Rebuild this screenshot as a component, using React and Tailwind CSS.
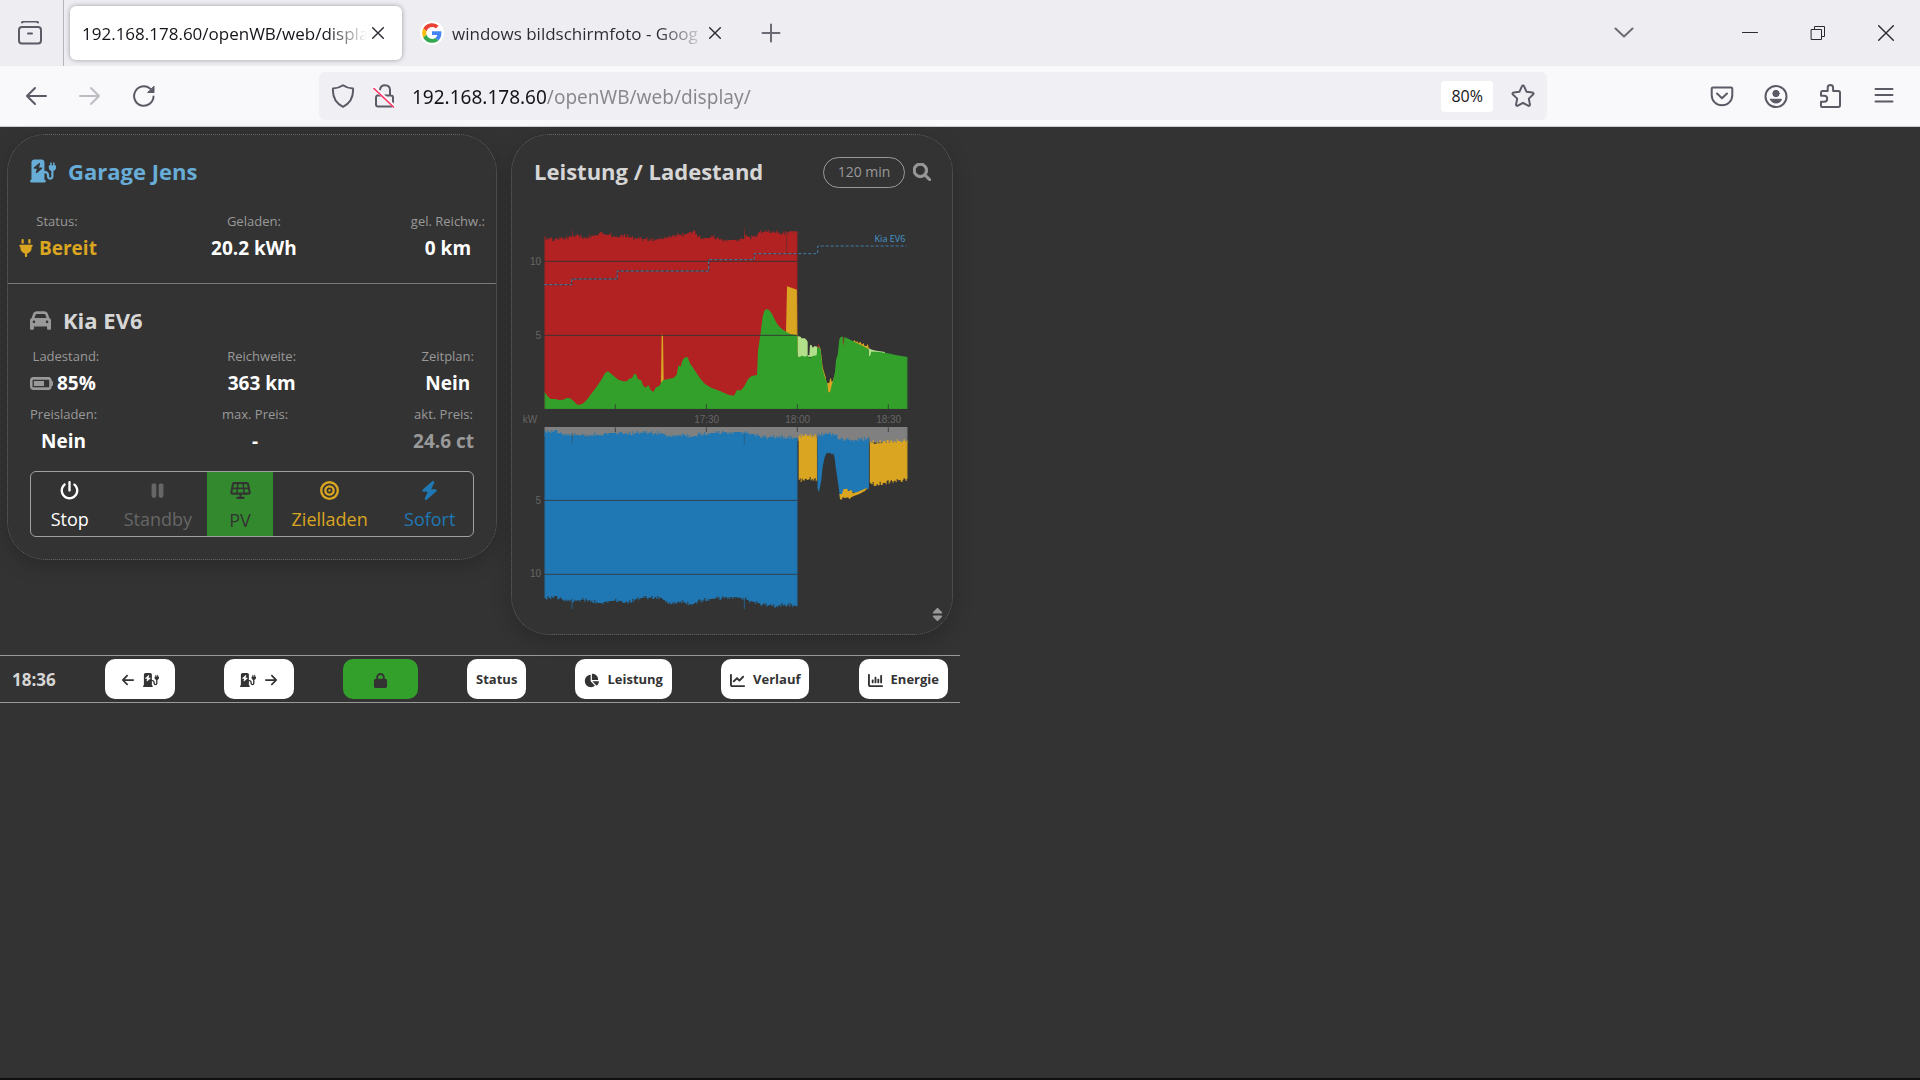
import {
  FaArrowLeft, FaArrowRight, FaBatteryThreeQuarters, FaBolt, FaBullseye, FaCar, FaChargingStation,
  FaChartColumn, FaChartLine, FaChartPie, FaLock, FaMagnifyingGlass, FaPause, FaPlug, FaPowerOff,
  FaSolarPanel, FaSort,
} from 'react-icons/fa6';

// ── Browser chrome ─────────────────────────────────────────────────────────────
function Svg({ size = 24, className = '', sw = 2, children }) {
  return (
    <svg width={size} height={size} viewBox={`0 0 ${size} ${size}`} fill="none" stroke="currentColor" strokeWidth={sw}
      strokeLinecap="round" strokeLinejoin="round" className={`shrink-0 ${className}`} aria-hidden="true">
      {children}
    </svg>
  );
}

function GoogleIcon() {
  return (
    <svg width="24" height="24" viewBox="-3 -3 54 54" className="shrink-0 rounded-full bg-white p-px" aria-hidden="true">
      <path fill="#EA4335" d="M24 9.5c3.54 0 6.71 1.22 9.21 3.6l6.85-6.85C35.9 2.38 30.47 0 24 0 14.62 0 6.51 5.38 2.56 13.22l7.98 6.19C12.43 13.72 17.74 9.5 24 9.5z" />
      <path fill="#4285F4" d="M46.98 24.55c0-1.57-.15-3.09-.38-4.55H24v9.02h12.94c-.58 2.96-2.26 5.48-4.78 7.18l7.73 6c4.51-4.18 7.09-10.36 7.09-17.65z" />
      <path fill="#FBBC05" d="M10.53 28.59c-.48-1.45-.76-2.99-.76-4.59s.27-3.14.76-4.59l-7.98-6.19C.92 16.46 0 20.12 0 24c0 3.88.92 7.54 2.56 10.78l7.97-6.19z" />
      <path fill="#34A853" d="M24 48c6.48 0 11.93-2.13 15.89-5.81l-7.73-6c-2.15 1.45-4.92 2.3-8.16 2.3-6.26 0-11.57-4.22-13.47-9.91l-7.98 6.19C6.51 42.62 14.62 48 24 48z" />
    </svg>
  );
}

function CloseIcon({ size = 12, sw = 1.4 }) {
  return (
    <Svg size={size} sw={sw}><path d={size === 12 ? 'M.7.7 11.3 11.3M11.3.7.7 11.3' : 'M.7.7 15.3 15.3M15.3.7.7 15.3'} /></Svg>
  );
}

function TabBar() {
  return (
    <div className="flex h-[66px] items-center bg-[#eeedf2] text-[#2b2a33]">
      <button aria-label="Firefox View" className="flex h-full w-16 items-center justify-center border-r border-[#b4b4ba] pr-1 text-[#5b5b66]">
        <Svg>
          <path d="M4 1.5c.4-.7 1-1 1.800-1h12.400c.8 0 1.400.3 1.800 1" />
          <rect x="1" y="6" width="22" height="16.500" rx="3" />
          <path d="M10 12.500h4" />
        </Svg>
      </button>
      <div className="ml-1.5 flex h-[54px] w-[332px] items-center justify-between rounded-md bg-white pr-[18px] pl-3 shadow-[0_0_5px_rgba(0,0,0,0.35)]">
        <span className="w-72 bg-[linear-gradient(90deg,#15141a_85%,transparent_99%)] bg-clip-text pt-0.5 text-[17px] whitespace-nowrap text-transparent">
          192.168.178.60/openWB/web/displa
        </span>
        <button aria-label="Tab schließen"><CloseIcon /></button>
      </div>
      <div className="ml-[18px] flex h-[54px] items-center">
        <GoogleIcon />
        <span className="ml-2 w-[252px] bg-[linear-gradient(90deg,#2b2a33_82%,transparent_101%)] bg-clip-text pt-0.5 text-[17px] whitespace-nowrap text-transparent">
          windows bildschirmfoto - Goog
        </span>
        <button aria-label="Tab schließen" className="ml-[5px]"><CloseIcon /></button>
      </div>
      <button aria-label="Neuer Tab" className="ml-10 text-[#6b6b76]">
        <Svg size={20} sw={2}><path d="M10 1.500v17M1.500 10h17" /></Svg>
      </button>
      <div className="ml-auto flex items-center gap-[52px] pr-[26px]">
        <button aria-label="Alle Tabs auflisten" className="mr-14 text-[#6b6b76]">
          <Svg size={20}><path d="m1.500 5.500 8.500 8 8.500-8" /></Svg>
        </button>
        <button aria-label="Minimieren"><Svg size={16} sw={1}><path d="M.5 7.500h15" /></Svg></button>
        <button aria-label="Verkleinern">
          <Svg size={16} sw={1}><path d="M1.500 4.500h10v10h-10zM4.500 4.500v-3h10v10h-3" /></Svg>
        </button>
        <button aria-label="Schließen"><CloseIcon size={16} /></button>
      </div>
    </div>
  );
}

function NavBar() {
  return (
    <div className="flex h-[61px] items-center border-b border-[#cccccc] bg-[#f9f9fb] text-[#5b5b66]">
      <div className="flex w-[319px] items-center gap-[30px] pl-6">
        <button aria-label="Zurück"><Svg><path d="M22 12H3M11 4l-8 8 8 8" /></Svg></button>
        <button aria-label="Vor" disabled className="text-[#bdbdc3]"><Svg><path d="M2 12h19M13 4l8 8-8 8" /></Svg></button>
        <button aria-label="Neu laden">
          <Svg>
            <path d="M21.500 12.500A9.700 9.700 0 1 1 18 4.600" />
            <path d="M22 2.500v6h-6z" fill="currentColor" strokeWidth="1" />
          </Svg>
        </button>
      </div>
      <div className="flex h-12 flex-1 items-center rounded-md bg-[#f0f0f4] pr-3 pl-3">
        <Svg><path d="M12 1.200c3 2.200 6.300 3 10 3.300.6 8-2.800 14.600-10 18.300C4.800 19.100 1.400 12.500 2 4.500c3.700-.3 7-1.100 10-3.300z" /></Svg>
        <Svg className="ml-[18px]">
          <path d="M4 11.500h14c1 0 2 .8 2 2v7c0 1-.8 2-2 2H5c-1.200 0-2-.8-2-2v-7c0-.8.3-1.400 1-2zM7 5.500c.5-2.600 2-4.300 5-4.300 3.200 0 5 2 5 5v5" />
          <path d="M1 3.500 21.500 22.500" stroke="#f9f9fb" strokeWidth="3.500" />
          <path d="M1 4.500 20.500 23" stroke="#ff2e5f" strokeWidth="1.600" />
        </Svg>
        <input aria-label="Adresse" defaultValue="192.168.178.60/openWB/web/display/"
          className="ml-[15px] min-w-0 flex-1 bg-[linear-gradient(90deg,#15141a_135px,#87868b_135px)] bg-clip-text pt-0.5 font-['Noto_Sans'] text-[19px] text-transparent outline-none" />
        <button className="mr-[18px] h-[31px] rounded bg-white px-2.5 text-base text-[#15141a]">80%</button>
        <button aria-label="Lesezeichen">
          <Svg><path d="M12 1.500c.5 0 .9.300 1.100.8l2.400 5.400 5.900.7c1.100.1 1.500 1.400.7 2.100l-4.300 4.100 1.100 5.800c.2 1.100-.9 1.800-1.800 1.300L12 18.800l-5.100 2.900c-.9.5-2-.2-1.800-1.300l1.100-5.800L1.900 10.500c-.8-.7-.4-2 .7-2.100l5.900-.7 2.400-5.400c.2-.5.6-.8 1.100-.8z" /></Svg>
        </button>
      </div>
      <div className="ml-[163px] flex items-center gap-[30px] pr-6">
        <button aria-label="Pocket">
          <Svg><path d="M3 3.500h18c.8 0 1.300.5 1.300 1.300V11c0 6-4.600 10.300-10.300 10.300S1.700 17 1.700 11V4.800C1.700 4 2.200 3.500 3 3.500zM7 9.500l5 4.700 5-4.700" /></Svg>
        </button>
        <button aria-label="Konto">
          <Svg>
            <circle cx="12" cy="12.500" r="10.500" />
            <circle cx="12" cy="9.500" r="3.200" fill="currentColor" strokeWidth="1" />
            <path d="M6.500 15.300h11c-.6 2.200-2.600 3.700-5.500 3.700s-4.900-1.500-5.500-3.700z" fill="currentColor" strokeWidth="1" />
          </Svg>
        </button>
        <button aria-label="Erweiterungen">
          <Svg><path d="M4 23c-.6 0-1-.4-1-1v-4.300h3.200a3 3 0 0 0 0-6H3V8.500C3 7.700 3.500 7 4.300 7h5.400V3.700a2.700 2.700 0 0 1 5.400 0V7h5.200c1 0 1.700.7 1.700 1.700v12.600c0 1-.7 1.700-1.700 1.700z" /></Svg>
        </button>
        <button aria-label="Menü"><Svg><path d="M3.500 5h17M3.500 11h17M3.500 17.500h17" /></Svg></button>
      </div>
    </div>
  );
}

// ── Charge point card ──────────────────────────────────────────────────────────
function Info({ label, children, className = 'text-white' }) {
  return (
    <div className="flex flex-col items-center gap-1">
      <div className="text-[13px] leading-[18px] text-[#999999]">{label}</div>
      <div className={`flex items-center gap-1 text-[19px] leading-7 font-bold ${className}`}>{children}</div>
    </div>
  );
}

function ModeButton({ icon: Icon, size = 19, className, children }) {
  return (
    <button className={`flex flex-col items-center justify-center gap-[7px] pt-1 ${className}`}>
      <Icon size={size} />
      {children}
    </button>
  );
}

function ChargeModes() {
  return (
    <div className="mx-[22px] mt-4 grid h-[66px] grid-cols-[78fr_99fr_66fr_114fr_87fr] overflow-hidden rounded-md border border-[#a0a0a0] text-lg leading-6">
      <ModeButton icon={FaPowerOff} className="text-white">Stop</ModeButton>
      <ModeButton icon={FaPause} className="text-[#666666]">Standby</ModeButton>
      <ModeButton icon={FaSolarPanel} size={21} className="bg-[#338a2e] text-[#333333]">PV</ModeButton>
      <ModeButton icon={FaBullseye} className="text-[#daa520]">Zielladen</ModeButton>
      <ModeButton icon={FaBolt} className="text-[#1f78b4]">Sofort</ModeButton>
    </div>
  );
}

function ChargePointCard() {
  return (
    <section className="self-start rounded-[38px] border border-dotted border-[#666666] bg-[#333333] pt-5 pb-[22px] shadow-[0_6px_20px_rgba(0,0,0,0.2)]">
      <h2 className="flex h-8 items-center gap-3 px-[22px] text-[22px] font-bold text-[#68add8]">
        <FaChargingStation size={26} />Garage Jens
      </h2>
      <div className="mt-[25px] flex justify-between border-b border-[#777777] pr-[11px] pb-[21px] pl-[9px]">
        <Info label="Status:" className="text-[#daa520]"><FaPlug size={18} />Bereit</Info>
        <Info label="Geladen:">20.2 kWh</Info>
        <Info label="gel. Reichw.:">0 km</Info>
      </div>
      <h2 className="mt-5 flex h-8 items-center gap-3 px-[22px] text-[22px] font-bold text-[#d6d6d6]">
        <FaCar size={21} className="text-[#999999]" />Kia EV6
      </h2>
      <div className="mt-[11px] flex justify-between px-[22px]">
        <Info label="Ladestand:" className="pr-1.5 text-white"><FaBatteryThreeQuarters size={23} className="text-[#999999]" />85%</Info>
        <Info label="Reichweite:">363 km</Info>
        <Info label="Zeitplan:">Nein</Info>
      </div>
      <div className="mt-2 flex justify-between px-[22px]">
        <Info label="Preisladen:">Nein</Info>
        <Info label="max. Preis:">-</Info>
        <Info label="akt. Preis:" className="text-[#999999]">24.6 ct</Info>
      </div>
      <ChargeModes />
    </section>
  );
}

// ── Power / SoC chart ──────────────────────────────────────────────────────────
const GRID_TOP = [[118, 333], [123, 343], [155, 343], [165, 335], [180, 340], [203, 334], [215, 330], [235, 338], [255, 333], [275, 330], [287, 320], [300, 329], [315, 329], [330, 336], [345, 330], [365, 332], [385, 340], [420, 342], [450, 344], [475, 336], [505, 330], [540, 328], [555, 320], [570, 322], [580, 336], [605, 340], [625, 335], [640, 343], [680, 345], [715, 342], [720, 330], [735, 338], [750, 332], [765, 321], [800, 319], [815, 321], [835, 325], [845, 320], [878, 317]];
const PV_TOP = '103,335 112,348 122,357 135,357 148,360 160,359 170,354 180,355 190,362 200,373 207,375 220,370 230,360 245,340 260,320 275,298 285,280 293,274 300,278 315,291 325,299 340,304 350,304 358,296 366,294 373,281 378,283 384,298 393,300 400,317 407,323 415,315 422,330 430,336 438,322 448,318 453,308 460,300 475,297 490,294 500,284 505,256 512,260 518,240 525,232 533,232 540,250 555,272 570,295 585,312 605,324 630,333 655,344 670,347 675,343 680,331 693,331 702,320 715,296 725,288 741,285 744,212 752,158 758,110 763,92 769,87 777,90 785,100 795,120 802,133 813,145 828,155 840,162 862,166 863,230 870,230 876,227 886,230 892,226 900,235 908,228 920,226 922,205 927,200 932,210 937,265 945,293 952,310 955,337 960,337 966,312 970,300 975,275 978,240 983,225 988,178 993,170 999,170 1001,192 1003,171 1015,176 1040,189 1060,199 1075,207 1078,228 1083,215 1100,215 1130,219 1160,226 1193,231';
const HOUSE_BOTTOM = [[103, 96], [110, 95], [145, 95], [150, 102], [170, 101], [187, 106], [205, 104], [230, 108], [250, 101], [270, 106], [285, 99], [310, 99], [340, 96], [352, 101], [380, 98], [420, 98], [455, 100], [470, 105], [520, 104], [545, 111], [565, 103], [600, 99], [640, 97], [700, 96], [720, 101], [745, 107], [770, 113], [800, 109], [850, 113], [863, 114]];
const CHARGE_BOTTOM = [[103, 599], [110, 593], [145, 593], [155, 599], [180, 599], [190, 605], [210, 599], [240, 601], [270, 610], [290, 604], [320, 601], [355, 606], [375, 598], [400, 593], [450, 592], [460, 600], [480, 608], [510, 604], [545, 614], [560, 605], [580, 599], [620, 595], [660, 591], [700, 594], [715, 602], [740, 608], [760, 614], [790, 618], [820, 613], [850, 616], [863, 620]];
const BAT_TOP = [[866, 108], [885, 108], [900, 106], [922, 108]];
const BAT_BOTTOM = [[866, 240], [885, 242], [900, 236], [922, 240]];
const LATE_TOP = [[922, 106], [935, 103], [960, 102], [978, 106], [985, 116], [1000, 117], [1030, 120], [1077, 115]];
const LATE_BAT_TOP = [[1079, 120], [1090, 126], [1120, 124], [1150, 124], [1193, 121]];
const LATE_BAT_BOTTOM = [[1079, 243], [1090, 253], [1120, 249], [1150, 243], [1193, 237]];
const SOC = '118,479 200,479 200,462 337,462 337,438 611,438 611,404 748,404 748,386 938,386 938,363 1205,363';

// Samples a profile every 3 units and adds the small load ripple, as a stepped edge.
function ripple(points, amp = 5) {
  const out = [];
  const end = points[points.length - 1][0];
  let i = 0;
  for (let x = points[0][0]; x <= end; x += 3) {
    while (i < points.length - 2 && x > points[i + 1][0]) i += 1;
    const [x0, y0] = points[i];
    const [x1, y1] = points[i + 1];
    const y = y0 + ((y1 - y0) * (x - x0)) / (x1 - x0);
    const n = Math.sin(x * 12.9898) * 43758.5453;
    const r = n - Math.floor(n);
    const v = Math.round(y + (r > 0.7 ? amp : r < 0.2 ? -amp : 0));
    out.push(`${x},${v}`, `${Math.min(x + 3, end)},${v}`);
  }
  return out;
}
const band = (top, bottom) => [...ripple(top), ...ripple(bottom).reverse()].join(' ');

const TICKS = [[316, ''], [589, '17:30'], [862, '18:00'], [1135, '18:30']];

function PowerChart() {
  return (
    <svg viewBox="0 0 1320 1236" className="mt-4 block w-full font-['Liberation_Sans']" role="img" aria-label="Leistung und Ladestand">
      {/* grid power */}
      <g transform="translate(-21 -237)">
        <polygon fill="#b22222" points={`118,852 ${ripple(GRID_TOP).join(' ')} 878,852`} />
        <path d="M201 340 202.500 305 204 340zM717 340 718.500 302 720 340z" fill="#b22222" />
        <path d="M845 316V385" stroke="#333333" strokeWidth="2" strokeOpacity="0.7" />
      </g>
      {/* production: PV, battery, charge from battery */}
      <g transform="translate(-6 228)">
        <polygon fill="#daa520" points="453,310 455,163 459,165 461,302 460,310" />
        <polygon fill="#daa520" points="828,158 831,19 861,29 863,168" />
        <polygon fill="#daa520" points="862,168 865,172 865,200 862,230" />
        <polygon fill="#daa520" points="924,204 926,195 932,208 938,262 947,292 950,310 958,308 960,297 963,294 965,306 969,302 975,280 966,340 950,340 944,300 934,262" />
        <polygon fill="#b22222" points="922,202 925,190 929,206" />
        <polygon fill="#daa520" points="1028,186 1034,180 1038,187 1042,183 1045,190 1052,185 1055,194 1061,189 1063,197 1070,198 1073,191 1078,210 1050,200" />
        <polygon fill="#b2df8a" points="863,232 863,168 872,170 874,175 884,175 890,180 893,186 893,225 898,226 900,196 904,194 908,203 914,198 922,200 922,230" />
        <polygon fill="#b2df8a" points="1076,205 1086,209 1100,212 1125,216 1125,222 1076,222" />
        <polygon fill="#33a02c" points={`103,387 ${PV_TOP} 1193,387`} />
        <polygon fill="#b2df8a" points="1077,206 1084,209 1082,222 1080,228 1077,228" />
        <path d="M1000 172V194" stroke="#b22222" strokeWidth="2" />
        <path d="M104 337V388H1192V232M862 166V-140" stroke="#333333" strokeOpacity="0.45" strokeWidth="3" fill="none" />
        <path d="M103 166H862M103 -56H862" stroke="#333333" strokeWidth="3" strokeOpacity="0.9" />
        <path d="M104 -130V337" stroke="#333333" strokeOpacity="0.3" strokeWidth="3" />
      </g>
      {/* consumption: house, charging, battery */}
      <g transform="translate(-6 588)">
        <polygon fill="#808080" points="103,81 103,108 860,122 1193,130 1193,81" />
        <polygon fill="#1f78b4" points={band(HOUSE_BOTTOM, CHARGE_BOTTOM)} />
        <path d="M186 590V627M703 590V627" stroke="#1f78b4" strokeWidth="2" />
        <path d="M187 100V131M703 100V135" stroke="#333333" strokeOpacity="0.5" strokeWidth="2" />
        <polygon fill="#daa520" points={band(BAT_TOP, BAT_BOTTOM)} />
        <polygon fill="#1f78b4" points={`${ripple(LATE_TOP).join(' ')} 1077,262 1074,270 1068,264 1056,274 1040,280 1025,276 1010,270 996,282 989,286 986,262 982,235 977,200 974,174 970,160 966,164 961,158 956,160 950,158 944,172 938,200 934,240 930,262 926,277 922,262`} />
        <polygon fill="#daa520" points="988,282 996,282 1000,268 1012,266 1014,274 1025,270 1028,280 1042,276 1072,263 1066,272 1048,282 1032,288 1024,292 1019,298 1014,292 1006,294 998,292 995,299 990,298" />
        <polygon fill="#daa520" points={band(LATE_BAT_TOP, LATE_BAT_BOTTOM)} />
        <path d="M104 81V600M862 112V622M1192 81V238M1078 112V262M922 106V262" stroke="#333333" strokeOpacity="0.35" strokeWidth="3" />
        <path d="M103 301H862M103 523H862" stroke="#333333" strokeWidth="3" strokeOpacity="0.8" />
      </g>
      {/* axes */}
      <g transform="translate(-6 588)" fill="#666666" fontSize="30">
        {TICKS.map(([x, label]) => (
          <g key={x}>
            <path d={`M${x} 13V27M${x} 82V96`} stroke="#333333" strokeWidth="3" strokeOpacity="0.8" />
            <text x={x + 1} y="69" textAnchor="middle">{label}</text>
          </g>
        ))}
        <text x="38" y="69">kW</text>
        <text x="93" y="-183" textAnchor="end">5</text>
        <text x="93" y="-404" textAnchor="end">10</text>
        <text x="93" y="312" textAnchor="end">5</text>
        <text x="93" y="532" textAnchor="end">10</text>
      </g>
      {/* state of charge */}
      <g transform="translate(-21 -237)" fill="none">
        <polyline points={SOC} stroke="#333333" strokeWidth="4" strokeOpacity="0.6" />
        <polyline points={SOC} stroke="#4292c6" strokeWidth="3" strokeDasharray="9 6" strokeOpacity="0.8" />
        <text x="1201" y="351" textAnchor="end" fill="#4292c6" fontSize="27" className="font-['Noto_Sans']">Kia EV6</text>
      </g>
    </svg>
  );
}

function PowerCard() {
  return (
    <section className="relative rounded-[38px] border border-dotted border-[#666666] bg-[#333333] pt-[21px] pb-[18px] shadow-[0_6px_20px_rgba(0,0,0,0.2)]">
      <div className="flex h-8 items-center pr-[21px] pl-[22px]">
        <h2 className="mr-auto pb-0.5 text-[22px] font-bold text-[#d6d6d6]">Leistung / Ladestand</h2>
        <button className="h-[31px] w-[82px] rounded-full border border-[#999999] text-sm text-[#999999]">120 min</button>
        <button aria-label="Zoom" className="ml-2 text-[#999999]"><FaMagnifyingGlass size={18} stroke="currentColor" strokeWidth="28" /></button>
      </div>
      <PowerChart />
      <button aria-label="Diagramm umkehren" className="absolute right-[7px] bottom-3 text-[#999999]"><FaSort size={15} /></button>
    </section>
  );
}

// ── Footer bar ─────────────────────────────────────────────────────────────────
function FooterButton({ children, className = 'bg-white px-[9px]', ...rest }) {
  return (
    <button className={`flex h-10 items-center justify-center gap-2 rounded-[10px] pt-0.5 text-[13px] font-bold text-[#333333] ${className}`} {...rest}>
      {children}
    </button>
  );
}

function FooterBar() {
  return (
    <nav className="mt-5 flex h-12 items-center justify-between border-y border-[#999999] pr-3 pl-3">
      <span className="pt-0.5 text-[17px] font-bold text-[#d6d6d6]">18:36</span>
      <FooterButton className="w-[70px] bg-white" aria-label="Voriger Ladepunkt"><FaArrowLeft size={14} /><FaChargingStation size={16} /></FooterButton>
      <FooterButton className="w-[70px] bg-white" aria-label="Nächster Ladepunkt"><FaChargingStation size={16} /><FaArrowRight size={14} /></FooterButton>
      <FooterButton className="w-[75px] bg-[#33a02c]" aria-label="Sperren"><FaLock size={15} /></FooterButton>
      <FooterButton>Status</FooterButton>
      <FooterButton><FaChartPie size={15} />Leistung</FooterButton>
      <FooterButton><FaChartLine size={15} />Verlauf</FooterButton>
      <FooterButton><FaChartColumn size={15} />Energie</FooterButton>
    </nav>
  );
}

export default function App() {
  return (
    <div className="flex min-h-screen flex-col border-b-2 border-[#111111] bg-[#333333] font-['Open_Sans',sans-serif]">
      <header>
        <TabBar />
        <NavBar />
      </header>
      <main className="w-1/2">
        <div className="grid grid-cols-[490fr_442fr] gap-3.5 px-[7px] pt-[7px]">
          <ChargePointCard />
          <PowerCard />
        </div>
        <FooterBar />
      </main>
    </div>
  );
}
